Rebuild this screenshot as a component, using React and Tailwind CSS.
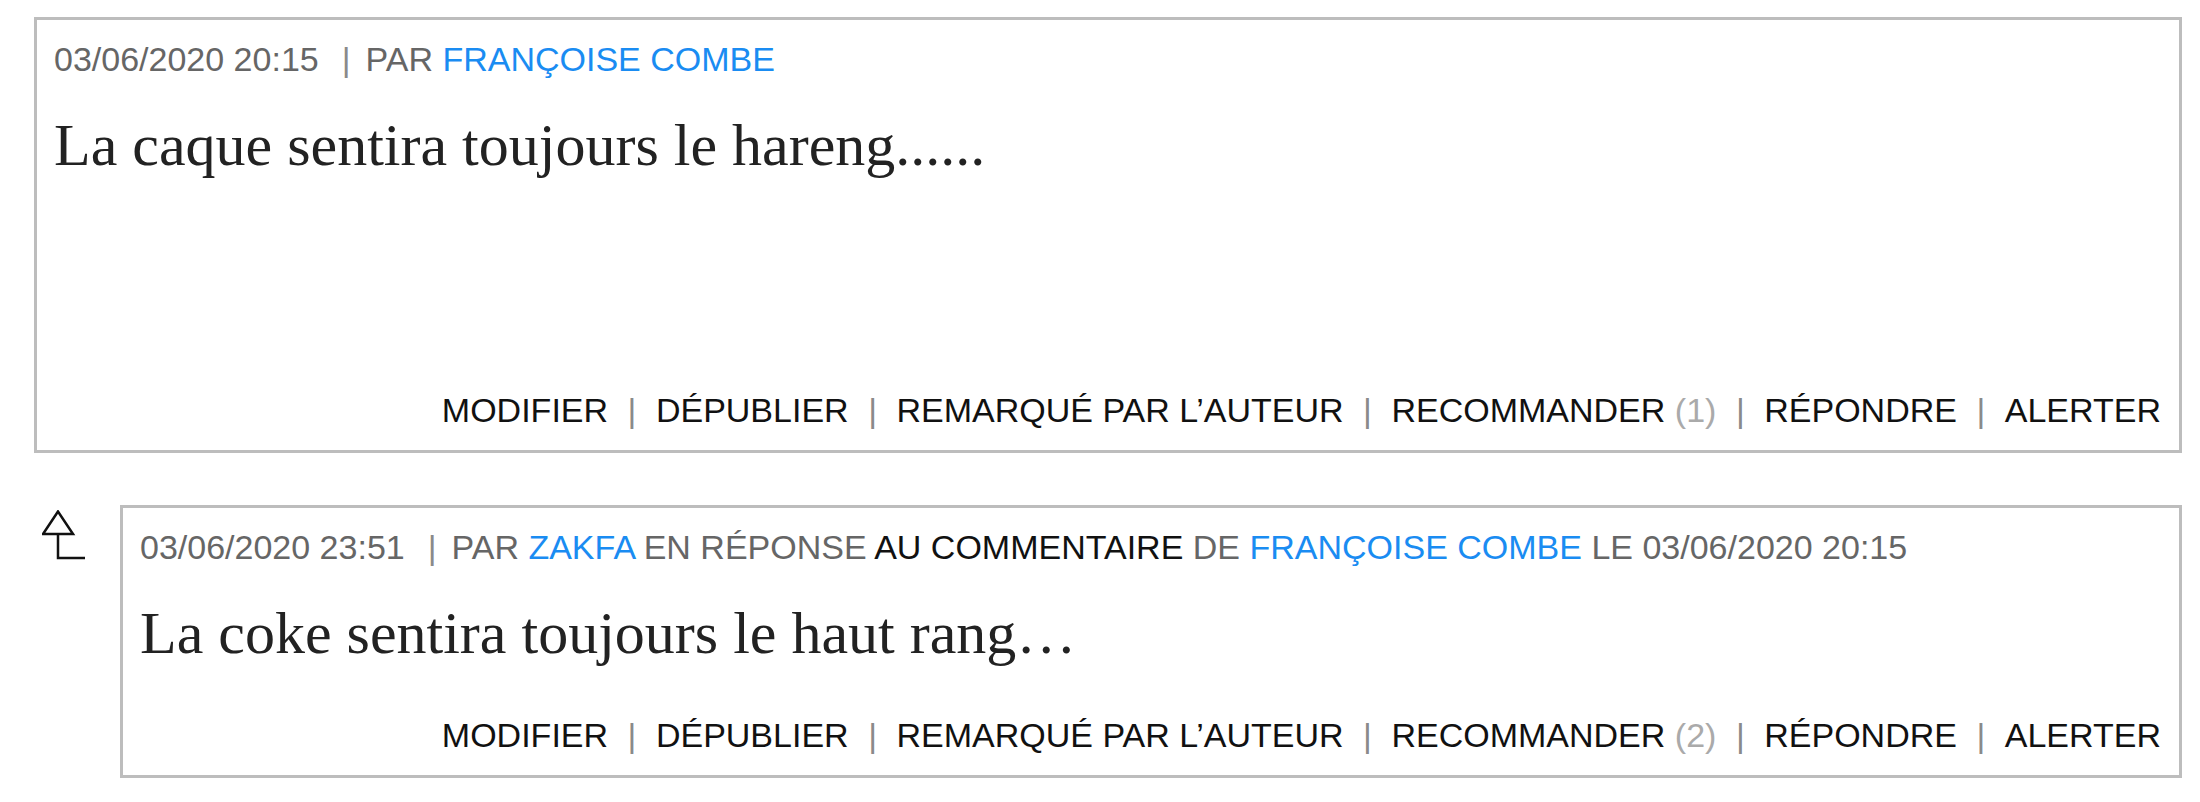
import React from 'react';

const sans = { fontFamily: '"Liberation Sans", Arial, Helvetica, sans-serif' };

const ReplyArrow = () => (
  <svg width="44" height="50" viewBox="0 0 44 50" fill="none" stroke="#111" strokeWidth="2.5" className="ml-[8px] mt-[5px]">
    <path d="M16 1.5 L1 24 L31 24 Z" strokeLinejoin="miter" />
    <path d="M16 24 L16 48 L43 48" />
  </svg>
);

const Sep = ({ className = 'mx-[19.5px]' }) => <span className={`text-[#8a8a8a] ${className}`}>|</span>;

const Actions = ({ count }) => {
  const items = ['MODIFIER', 'DÉPUBLIER', 'REMARQUÉ PAR L’AUTEUR', 'RECOMMANDER', 'RÉPONDRE', 'ALERTER'];
  return (
    <div className="flex justify-end text-[34px] leading-[39px] text-[#111] whitespace-nowrap font-['Liberation_Sans',Arial,sans-serif]">
      {items.map((label, idx) => (
        <React.Fragment key={label}>
          {idx > 0 && <Sep />}
          <span>
            {label}
            {label === 'RECOMMANDER' && <span className="text-[#aaaaaa]"> ({count})</span>}
          </span>
        </React.Fragment>
      ))}
    </div>
  );
};

const Comment = ({ meta, body, count, tall }) => (
  <div
    className={`flex-1 flex flex-col border-[3px] border-[#bdbdbd] bg-white pt-[20px] pb-[20px] pl-[17px] pr-[18px] ${tall ? 'min-h-[436px]' : ''}`}
  >
    <div className="text-[34px] leading-[39px] text-[#666] whitespace-nowrap font-['Liberation_Sans',Arial,sans-serif]">
      {meta}
    </div>
    <p className="mt-[32px] text-[60px] leading-[69px] text-[#222] font-['Liberation_Serif','Times_New_Roman',serif]">
      {body}
    </p>
    <div className={tall ? 'mt-auto' : 'mt-[48px]'}>
      <Actions count={count} />
    </div>
  </div>
);

const Blue = ({ children }) => <span className="text-[#1a8cf2]">{children}</span>;

export default function App() {
  return (
    <div className="min-h-screen bg-white pt-[17px] pl-[34px] pr-[18px]" style={sans}>
      <Comment
        tall
        count={1}
        meta={
          <>
            03/06/2020 20:15
            <Sep className="ml-[23px] mr-[15px]" />
            PAR <Blue>FRANÇOISE COMBE</Blue>
          </>
        }
        body="La caque sentira toujours le hareng......"
      />

      <div className="flex mt-[52px]">
        <div className="w-[86px] shrink-0">
          <ReplyArrow />
        </div>
        <Comment
          count={2}
          meta={
            <>
              03/06/2020 23:51
              <Sep className="ml-[23px] mr-[15px]" />
              PAR <Blue>ZAKFA</Blue> EN RÉPONSE <span className="text-[#111]">AU COMMENTAIRE</span> DE{' '}
              <Blue>FRANÇOISE COMBE</Blue> LE 03/06/2020 20:15
            </>
          }
          body="La coke sentira toujours le haut rang…"
        />
      </div>
    </div>
  );
}
